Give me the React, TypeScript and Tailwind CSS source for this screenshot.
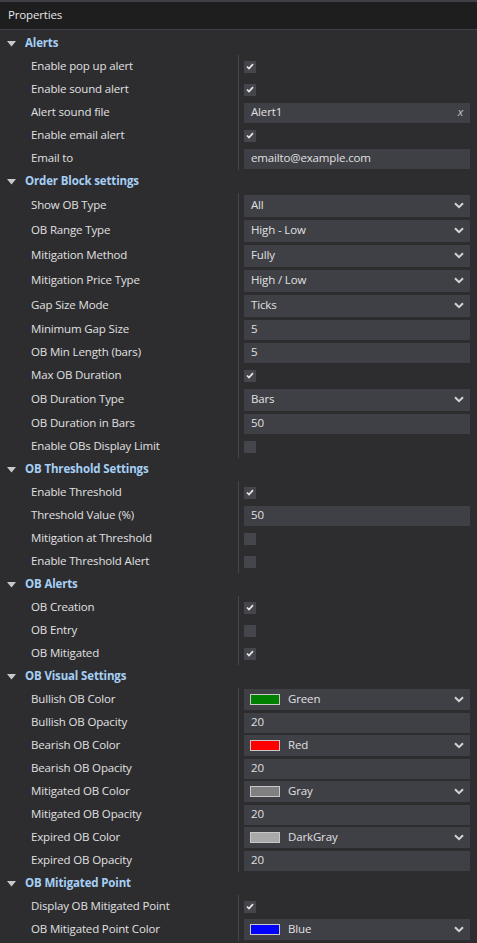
import React from "react";

type Row =
  | { label: string; kind: "check"; checked: boolean }
  | { label: string; kind: "text"; value: string }
  | { label: string; kind: "file"; value: string }
  | { label: string; kind: "select"; value: string }
  | { label: string; kind: "color"; value: string; swatch: string };

const SECTIONS: { title: string; rows: Row[] }[] = [
  {
    title: "Alerts",
    rows: [
      { label: "Enable pop up alert", kind: "check", checked: true },
      { label: "Enable sound alert", kind: "check", checked: true },
      { label: "Alert sound file", kind: "file", value: "Alert1" },
      { label: "Enable email alert", kind: "check", checked: true },
      { label: "Email to", kind: "text", value: "emailto@example.com" },
    ],
  },
  {
    title: "Order Block settings",
    rows: [
      { label: "Show OB Type", kind: "select", value: "All" },
      { label: "OB Range Type", kind: "select", value: "High - Low" },
      { label: "Mitigation Method", kind: "select", value: "Fully" },
      { label: "Mitigation Price Type", kind: "select", value: "High / Low" },
      { label: "Gap Size Mode", kind: "select", value: "Ticks" },
      { label: "Minimum Gap Size", kind: "text", value: "5" },
      { label: "OB Min Length (bars)", kind: "text", value: "5" },
      { label: "Max OB Duration", kind: "check", checked: true },
      { label: "OB Duration Type", kind: "select", value: "Bars" },
      { label: "OB Duration in Bars", kind: "text", value: "50" },
      { label: "Enable OBs Display Limit", kind: "check", checked: false },
    ],
  },
  {
    title: "OB Threshold Settings",
    rows: [
      { label: "Enable Threshold", kind: "check", checked: true },
      { label: "Threshold Value (%)", kind: "text", value: "50" },
      { label: "Mitigation at Threshold", kind: "check", checked: false },
      { label: "Enable Threshold Alert", kind: "check", checked: false },
    ],
  },
  {
    title: "OB Alerts",
    rows: [
      { label: "OB Creation", kind: "check", checked: true },
      { label: "OB Entry", kind: "check", checked: false },
      { label: "OB Mitigated", kind: "check", checked: true },
    ],
  },
  {
    title: "OB Visual Settings",
    rows: [
      { label: "Bullish OB Color", kind: "color", value: "Green", swatch: "#008000" },
      { label: "Bullish OB Opacity", kind: "text", value: "20" },
      { label: "Bearish OB Color", kind: "color", value: "Red", swatch: "#ff0000" },
      { label: "Bearish OB Opacity", kind: "text", value: "20" },
      { label: "Mitigated OB Color", kind: "color", value: "Gray", swatch: "#808080" },
      { label: "Mitigated OB Opacity", kind: "text", value: "20" },
      { label: "Expired OB Color", kind: "color", value: "DarkGray", swatch: "#a9a9a9" },
      { label: "Expired OB Opacity", kind: "text", value: "20" },
    ],
  },
  {
    title: "OB Mitigated Point",
    rows: [
      { label: "Display OB Mitigated Point", kind: "check", checked: true },
      { label: "OB Mitigated Point Color", kind: "color", value: "Blue", swatch: "#0000ff" },
    ],
  },
];

function Chevron() {
  return (
    <svg width="10" height="7" viewBox="0 0 10 7" className="ml-auto mr-[3px] shrink-0">
      <path d="M1 1.2 L5 5.2 L9 1.2" fill="none" stroke="#d4d4d4" strokeWidth="2" />
    </svg>
  );
}

function Value({ row }: { row: Row }) {
  switch (row.kind) {
    case "check":
      return (
        <div className="w-[12px] h-[12px] bg-[#45454c] flex items-center justify-center">
          {row.checked && (
            <svg width="8" height="7" viewBox="0 0 8 7">
              <path d="M1 3.5 L3 5.5 L7 1.2" fill="none" stroke="#e8e8e8" strokeWidth="1.7" />
            </svg>
          )}
        </div>
      );
    case "text":
      return (
        <div className="h-[20px] bg-[#3f3f46] flex items-center pl-[7px] pb-[2px]">{row.value}</div>
      );
    case "file":
      return (
        <div className="h-[20px] bg-[#3f3f46] flex items-center pl-[7px] pr-[7px] pb-[2px]">
          <span>{row.value}</span>
          <span className="ml-auto italic text-[#c8c8c8]">x</span>
        </div>
      );
    case "select":
      return (
        <div className="h-[22px] bg-[#3f3f46] flex items-center pl-[7px] pr-[3px]">
          <span className="pb-[2px]">{row.value}</span>
          <Chevron />
        </div>
      );
    case "color":
      return (
        <div className="h-[21px] bg-[#3f3f46] flex items-center pl-[6px] pr-[3px]">
          <span
            className="w-[30px] h-[11px] border border-[#c8c8c8] shrink-0"
            style={{ backgroundColor: row.swatch }}
          />
          <span className="ml-[8px] pb-[2px]">{row.value}</span>
          <Chevron />
        </div>
      );
  }
}

export default function App() {
  return (
    <div
      className="w-[477px] h-[943px] bg-[#2d2d30] text-[#e0e0e0] text-[11.5px] tracking-[-0.15px] leading-none overflow-hidden"
      style={{ fontFamily: "'Open Sans', 'Noto Sans', sans-serif" }}
    >
      <div className="h-[30px] bg-[#1e1e1e] border-t-2 border-b border-[#3f3f46] flex items-center pl-[8px] pb-[2px] text-[#e6e6e6]">
        Properties
      </div>
      <div className="pt-[2px]">
        {SECTIONS.map((section) => (
          <div key={section.title}>
            <div className="h-[23px] flex items-center">
              <svg width="9" height="6" viewBox="0 0 9 6" className="ml-[7px] mr-[9px]">
                <path d="M0 0 H9 L4.5 5.5 Z" fill="#c8c8c8" />
              </svg>
              <span className="font-bold text-[#a6cff5] pb-[2px]">{section.title}</span>
            </div>
            {section.rows.map((row) => (
              <div
                key={row.label}
                className={`flex ${row.kind === "select" ? "h-[25px]" : "h-[23px]"}`}
              >
                <div className="w-[238px] pl-[31px] pb-[2px] flex items-center shrink-0">{row.label}</div>
                <div className="flex-1 border-l border-[#45454a] pl-[5px] pr-[7px] flex flex-col justify-center">
                  <Value row={row} />
                </div>
              </div>
            ))}
          </div>
        ))}
      </div>
    </div>
  );
}
